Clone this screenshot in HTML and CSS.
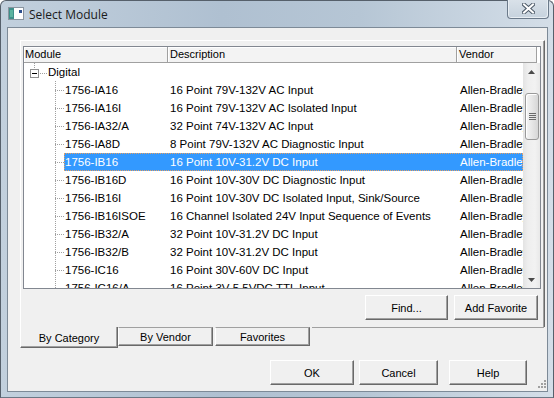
FILE: index.html
```html
<!DOCTYPE html>
<html lang="en">
<head>
<meta charset="UTF-8" />
<title>Select Module</title>
<link rel="stylesheet" href="styles.css">
</head>
<body>
  <div class="window">
    <div class="titlebar">
      <svg class="app-icon" viewBox="0 0 16 13" width="16" height="13" aria-hidden="true">
        <rect x="0.5" y="0.5" width="15" height="12" fill="#fff" stroke="#8a95a0"/>
        <rect x="1" y="1" width="5" height="11" fill="#3f8f8a"/>
        <rect x="2" y="3" width="3" height="7" fill="#5cb3a0"/>
        <rect x="11" y="3" width="3" height="3" fill="#2d4f8f"/>
      </svg>
      <span class="title">Select Module</span>
      <div class="close-btn">
        <svg viewBox="0 0 13 11" width="13" height="11" aria-hidden="true">
          <path d="M2 1.5 L11 9.5 M11 1.5 L2 9.5" stroke="#4d5a68" stroke-width="4" stroke-linecap="square"/>
          <path d="M2 1.5 L11 9.5 M11 1.5 L2 9.5" stroke="#fff" stroke-width="2" stroke-linecap="square"/>
        </svg>
      </div>
    </div>

    <div class="client">
      <div class="tabpage">
        <div class="tree-list">
          <div class="list-header">
            <div class="hcell col-module">Module</div>
            <div class="hcell col-desc">Description</div>
            <div class="hcell col-vendor">Vendor</div>
          </div>
          <div class="list-body">
            <div class="rows">
              <div class="row group-row">
                <span class="toggle"><span class="toggle-box"></span></span>
                <span class="hdots"></span>
                <span class="group-label">Digital</span>
              </div>
              <div class="row"><span class="guide"></span><div class="row-main"><span class="cell mod">1756-IA16</span><span class="cell desc">16 Point 79V-132V AC Input</span><span class="cell vendor">Allen-Bradley</span></div></div>
              <div class="row"><span class="guide"></span><div class="row-main"><span class="cell mod">1756-IA16I</span><span class="cell desc">16 Point 79V-132V AC Isolated Input</span><span class="cell vendor">Allen-Bradley</span></div></div>
              <div class="row"><span class="guide"></span><div class="row-main"><span class="cell mod">1756-IA32/A</span><span class="cell desc">32 Point 74V-132V AC Input</span><span class="cell vendor">Allen-Bradley</span></div></div>
              <div class="row"><span class="guide"></span><div class="row-main"><span class="cell mod">1756-IA8D</span><span class="cell desc">8 Point 79V-132V AC Diagnostic Input</span><span class="cell vendor">Allen-Bradley</span></div></div>
              <div class="row selected"><span class="guide"></span><div class="row-main"><span class="cell mod">1756-IB16</span><span class="cell desc">16 Point 10V-31.2V DC Input</span><span class="cell vendor">Allen-Bradley</span></div></div>
              <div class="row"><span class="guide"></span><div class="row-main"><span class="cell mod">1756-IB16D</span><span class="cell desc">16 Point 10V-30V DC Diagnostic Input</span><span class="cell vendor">Allen-Bradley</span></div></div>
              <div class="row"><span class="guide"></span><div class="row-main"><span class="cell mod">1756-IB16I</span><span class="cell desc">16 Point 10V-30V DC Isolated Input, Sink/Source</span><span class="cell vendor">Allen-Bradley</span></div></div>
              <div class="row"><span class="guide"></span><div class="row-main"><span class="cell mod">1756-IB16ISOE</span><span class="cell desc">16 Channel Isolated 24V Input Sequence of Events</span><span class="cell vendor">Allen-Bradley</span></div></div>
              <div class="row"><span class="guide"></span><div class="row-main"><span class="cell mod">1756-IB32/A</span><span class="cell desc">32 Point 10V-31.2V DC Input</span><span class="cell vendor">Allen-Bradley</span></div></div>
              <div class="row"><span class="guide"></span><div class="row-main"><span class="cell mod">1756-IB32/B</span><span class="cell desc">32 Point 10V-31.2V DC Input</span><span class="cell vendor">Allen-Bradley</span></div></div>
              <div class="row"><span class="guide"></span><div class="row-main"><span class="cell mod">1756-IC16</span><span class="cell desc">16 Point 30V-60V DC Input</span><span class="cell vendor">Allen-Bradley</span></div></div>
              <div class="row"><span class="guide"></span><div class="row-main"><span class="cell mod">1756-IC16/A</span><span class="cell desc">16 Point 3V-5.5VDC TTL Input</span><span class="cell vendor">Allen-Bradley</span></div></div>
            </div>
            <div class="scrollbar">
              <div class="sb-btn">
                <svg viewBox="0 0 7 4" width="7" height="4"><polygon points="3.5,0 7,4 0,4" fill="#4a4a4a"/></svg>
              </div>
              <div class="sb-thumb"><span class="grip"></span></div>
              <div class="sb-track"></div>
              <div class="sb-btn">
                <svg viewBox="0 0 7 4" width="7" height="4"><polygon points="0,0 7,0 3.5,4" fill="#4a4a4a"/></svg>
              </div>
            </div>
          </div>
        </div>
        <div class="page-actions">
          <button class="btn btn-find">Find...</button>
          <button class="btn btn-fav">Add Favorite</button>
        </div>
      </div>

      <div class="tabs">
        <div class="tab active">By Category</div>
        <div class="tab">By Vendor</div>
        <div class="tab">Favorites</div>
        <div class="tab-fill"></div>
      </div>

      <div class="dialog-actions">
        <button class="btn dlg-btn btn-ok">OK</button>
        <button class="btn dlg-btn btn-cancel">Cancel</button>
        <button class="btn dlg-btn btn-help">Help</button>
      </div>

      <svg class="size-grip" viewBox="0 0 12 12" width="12" height="12" aria-hidden="true">
        <g fill="#a0a0a0">
          <rect x="9" y="1" width="2" height="2"/>
          <rect x="6" y="4" width="2" height="2"/><rect x="9" y="4" width="2" height="2"/>
          <rect x="3" y="7" width="2" height="2"/><rect x="6" y="7" width="2" height="2"/><rect x="9" y="7" width="2" height="2"/>
        </g>
      </svg>
    </div>
  </div>
</body>
</html>
```

FILE: styles.css
```css
/* Base */
*, *::before, *::after {
  box-sizing: border-box;
}

body {
  margin: 0;
  width: 554px;
  height: 398px;
  overflow: hidden;
  font-family: "Liberation Sans", Arial, sans-serif;
  font-size: 11px;
  color: #000;
  background: #fff;
}

/* Window frame */
.window {
  width: 554px;
  height: 398px;
  border: 1px solid #56606b;
  border-bottom-color: #6c7885;
  border-radius: 6px 6px 0 0;
  background: linear-gradient(to right, #c2d0dd 0%, #afc0d1 40%, #b6c6d5 65%, #d4dee8 100%);
  display: flex;
  flex-direction: column;
}

.titlebar {
  height: 26px;
  display: flex;
  align-items: flex-start;
}

.app-icon {
  margin: 6px 0 0 7px;
  flex-shrink: 0;
}

.title {
  margin: 5px 0 0 5px;
  font-family: "Open Sans", "Noto Sans", sans-serif;
  font-size: 12px;
  line-height: 17px;
  color: #1b1b1b;
}

.close-btn {
  margin: -1px 4px 0 auto;
  width: 42px;
  height: 19px;
  border: 1px solid #6b7a8a;
  border-top: none;
  border-radius: 0 0 4px 4px;
  background: linear-gradient(#d9e1e9, #c6d2dd);
  box-shadow: inset 1px 0 #e8eef3, inset -1px -1px #e8eef3;
  display: flex;
  align-items: center;
  justify-content: center;
  padding-bottom: 1px;
}

/* Client area */
.client {
  flex: 1;
  margin: 0 5px 5px 6px;
  border: 1px solid #7d8a97;
  background: #f0f0f0;
  position: relative;
}

.tabpage {
  margin: 12px 0 0 12px;
  width: 525px;
  border-top: 1px solid #fff;
  border-left: 1px solid #fff;
  border-right: 1px solid #696969;
  box-shadow: inset -1px 0 #a0a0a0;
  display: flex;
  flex-direction: column;
}

/* Tree list */
.tree-list {
  margin: 5px 0 0 2px;
  width: 518px;
  height: 243px;
  border: 1px solid #828790;
  background: #fff;
  display: flex;
  flex-direction: column;
  overflow: hidden;
}

.list-header {
  display: flex;
  height: 16px;
  flex-shrink: 0;
  background: #fff;
}

.hcell {
  height: 16px;
  line-height: 14px;
  padding-left: 1px;
  background: #f3f3f3;
  border-right: 1px solid #a0a0a0;
  border-bottom: 1px solid #a0a0a0;
  box-shadow: inset 1px 1px #fff;
  white-space: nowrap;
}

.col-module { width: 144px; }
.col-desc { width: 289px; padding-left: 2px; }
.col-vendor { width: 80px; padding-left: 2px; }

.list-body {
  flex: 1;
  display: flex;
  min-height: 0;
}

.rows {
  width: 499px;
  overflow: hidden;
  font-size: 11.5px;
}

.row {
  height: 18px;
  display: flex;
  align-items: stretch;
  padding-left: 31px;
  white-space: nowrap;
}

.guide {
  width: 9px;
  flex-shrink: 0;
  background:
    linear-gradient(to bottom, #a0a0a0 50%, transparent 50%) 0 0 / 1px 2px repeat-y,
    linear-gradient(to right, #a0a0a0 50%, transparent 50%) 2px 9px / 2px 1px repeat-x;
}

.row-main {
  flex: 1;
  display: flex;
  align-items: center;
  min-width: 0;
}

.cell {
  overflow: hidden;
  line-height: 16px;
}

.cell.mod { width: 104px; padding-left: 1px; }
.cell.desc { width: 289px; padding-left: 2px; }
.cell.vendor { flex: 1; padding-left: 3px; }

.row.selected .row-main {
  background: #3399ff;
  color: #fff;
  outline: 1px dotted #e8a060;
  outline-offset: -1px;
}

/* Group node */
.group-row {
  padding-left: 6px;
  align-items: flex-start;
}

.toggle {
  width: 9px;
  height: 18px;
  flex-shrink: 0;
  padding-top: 6px;
  background:
    linear-gradient(to bottom, #a0a0a0 50%, transparent 50%) 4px 0 / 1px 2px,
    linear-gradient(to bottom, #a0a0a0 50%, transparent 50%) 4px 2px / 1px 2px,
    linear-gradient(to bottom, #a0a0a0 50%, transparent 50%) 4px 4px / 1px 2px;
  background-repeat: no-repeat;
}

.toggle-box {
  display: block;
  width: 9px;
  height: 9px;
  border: 1px solid #919191;
  background: linear-gradient(#000, #000) center / 5px 1px no-repeat, #fff;
}

.hdots {
  width: 7px;
  height: 1px;
  margin: 10px 0 0 1px;
  background: linear-gradient(to right, #a0a0a0 50%, transparent 50%) 0 0 / 2px 1px repeat-x;
}

.group-label {
  margin-left: 1px;
  line-height: 18px;
}

/* Scrollbar */
.scrollbar {
  width: 17px;
  display: flex;
  flex-direction: column;
  background: linear-gradient(to right, #e3e3e3, #eeeeee 30%, #f2f2f2 70%, #e8e8e8);
}

.sb-btn {
  height: 17px;
  flex-shrink: 0;
  display: flex;
  align-items: center;
  justify-content: center;
}

.sb-thumb {
  height: 47px;
  margin: 13px 1px 0 2px;
  border: 1px solid #999;
  border-radius: 3px;
  background: linear-gradient(to right, #f5f5f5, #e6e6e6 50%, #d6d6d6);
  box-shadow: inset 1px 1px #fff;
  display: flex;
  align-items: center;
  justify-content: center;
}

.grip {
  width: 7px;
  height: 7px;
  background: repeating-linear-gradient(to bottom, #6a6a6a 0 1px, transparent 1px 2px);
}

.sb-track {
  flex: 1;
}

/* Buttons */
.btn {
  height: 25px;
  padding: 0;
  background: #f0f0f0;
  border: 1px solid;
  border-color: #fff #696969 #696969 #fff;
  box-shadow: inset -1px -1px #a0a0a0;
  font-family: "Liberation Sans", Arial, sans-serif;
  font-size: 11px;
  color: #000;
}

.page-actions {
  display: flex;
  justify-content: flex-end;
  gap: 6px;
  padding: 6px 6px 7px 0;
}

.btn-find { width: 83px; }
.btn-fav { width: 84px; }

/* Tabs along the bottom */
.tabs {
  display: flex;
  align-items: flex-start;
  margin-left: 12px;
  width: 525px;
  height: 21px;
}

.tab {
  width: 95px;
  height: 19px;
  line-height: 18px;
  text-align: center;
  border: 1px solid;
  border-color: #a0a0a0 #696969 #696969 #fff;
  box-shadow: inset -1px -1px #a0a0a0;
  margin-right: 2px;
}

.tab.active {
  width: 98px;
  height: 21px;
  padding-top: 3px;
  line-height: 17px;
  border-top: none;
  margin-right: 0;
}

.tab-fill {
  flex: 1;
  height: 1px;
  background: #a0a0a0;
  margin-right: 1px;
}

.dialog-actions {
  display: flex;
  justify-content: flex-end;
  margin-top: 12px;
  padding-right: 20px;
}

.btn-ok { width: 84px; }
.btn-cancel { width: 79px; margin-left: 5px; }
.btn-help { width: 78px; margin-left: 11px; }

.size-grip {
  position: absolute;
  right: 0;
  bottom: 0;
}
```
